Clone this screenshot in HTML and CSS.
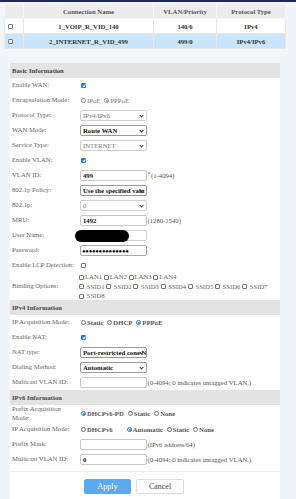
FILE: index.html
```html
<!DOCTYPE html>
<html>
<head>
<meta charset="utf-8">
<link rel="stylesheet" href="styles.css">
</head>
<body>
<div class="topbar"></div>
<table class="conn">
  <tr class="hd"><th class="ck"></th><th>Connection Name</th><th>VLAN/Priority</th><th>Protocol Type</th></tr>
  <tr><td class="ck"><span class="cb"></span></td><td>1_VOIP_R_VID_140</td><td>140/6</td><td>IPv4</td></tr>
  <tr class="sel"><td class="ck"><span class="cb"></span></td><td>2_INTERNET_R_VID_499</td><td>499/0</td><td>IPv4/IPv6</td></tr>
</table>

<div class="panel">
  <div class="sec">Basic Information</div>
  <div class="row"><div class="lbl">Enable WAN:</div><div class="ctl"><span class="cb on"></span></div></div>
  <div class="row"><div class="lbl">Encapsulation Mode:</div><div class="ctl"><span class="rd dis"></span><span class="opt dis">IPoE</span><span class="rd dis on"></span><span class="opt dis">PPPoE</span></div></div>
  <div class="row"><div class="lbl">Protocol Type:</div><div class="ctl"><span class="sel-box dis">IPv4/IPv6<i class="chev"></i></span></div></div>
  <div class="row"><div class="lbl">WAN Mode:</div><div class="ctl"><span class="sel-box act">Route WAN<i class="chev"></i></span></div></div>
  <div class="row"><div class="lbl">Service Type:</div><div class="ctl"><span class="sel-box dis">INTERNET<i class="chev"></i></span></div></div>
  <div class="row"><div class="lbl">Enable VLAN:</div><div class="ctl"><span class="cb on"></span></div></div>
  <div class="row"><div class="lbl">VLAN ID:</div><div class="ctl"><span class="inp val">499</span><span class="req">*</span><span class="note">(1-4094)</span></div></div>
  <div class="row"><div class="lbl">802.1p Policy:</div><div class="ctl"><span class="sel-box act">Use the specified valu<i class="chev"></i></span></div></div>
  <div class="row"><div class="lbl">802.1p:</div><div class="ctl"><span class="sel-box dis">0<i class="chev"></i></span></div></div>
  <div class="row"><div class="lbl">MRU:</div><div class="ctl"><span class="inp val">1492</span><span class="note">(1280-1540)</span></div></div>
  <div class="row"><div class="lbl">User Name:</div><div class="ctl"><span class="inp user"><span class="redact"></span></span></div></div>
  <div class="row"><div class="lbl">Password:</div><div class="ctl"><span class="inp pw">●●●●●●●●●●●●●●</span></div></div>
  <div class="row"><div class="lbl">Enable LCP Detection:</div><div class="ctl"><span class="cb"></span></div></div>
  <div class="row bind"><div class="lbl">Binding Options:</div>
    <div class="ctl flow">
      <div><span class="cb sq"></span>LAN1 <span class="cb sq"></span>LAN2 <span class="cb sq"></span>LAN3 <span class="cb sq"></span>LAN4</div>
      <div><span class="cb sq"></span> SSID1 <span class="cb sq"></span> SSID2 <span class="cb sq"></span> SSID3 <span class="cb sq"></span> SSID4 <span class="cb sq"></span> SSID5 <span class="cb sq"></span> SSID6 <span class="cb sq"></span> SSID7 <span class="cb sq"></span> SSID8</div>
    </div>
  </div>

  <div class="sec">IPv4 Information</div>
  <div class="row"><div class="lbl">IP Acquisition Mode:</div><div class="ctl"><span class="rd"></span><span class="opt">Static</span><span class="rd"></span><span class="opt">DHCP</span><span class="rd on"></span><span class="opt">PPPoE</span></div></div>
  <div class="row"><div class="lbl">Enable NAT:</div><div class="ctl"><span class="cb on"></span></div></div>
  <div class="row"><div class="lbl">NAT type:</div><div class="ctl"><span class="sel-box act">Port-restricted cone N<i class="chev"></i></span></div></div>
  <div class="row"><div class="lbl">Dialing Method:</div><div class="ctl"><span class="sel-box act">Automatic<i class="chev"></i></span></div></div>
  <div class="row"><div class="lbl">Multicast VLAN ID:</div><div class="ctl"><span class="inp val"></span><span class="note">(0-4094; 0 indicates untagged VLAN.)</span></div></div>

  <div class="sec">IPv6 Information</div>
  <div class="row tall"><div class="lbl">Prefix Acquisition Mode:</div><div class="ctl"><span class="rd on"></span><span class="opt">DHCPv6-PD</span><span class="rd"></span><span class="opt">Static</span><span class="rd"></span><span class="opt">None</span></div></div>
  <div class="row"><div class="lbl">IP Acquisition Mode:</div><div class="ctl"><span class="rd"></span><span class="opt wide">DHCPv6</span><span class="rd on"></span><span class="opt">Automatic</span><span class="rd"></span><span class="opt">Static</span><span class="rd"></span><span class="opt">None</span></div></div>
  <div class="row"><div class="lbl">Prefix Mask:</div><div class="ctl"><span class="inp val"></span><span class="note">(IPv6 address/64)</span></div></div>
  <div class="row"><div class="lbl">Multicast VLAN ID:</div><div class="ctl"><span class="inp val">0</span><span class="note">(0-4094; 0 indicates untagged VLAN.)</span></div></div>

  <div class="actions">
    <button class="btn apply">Apply</button>
    <button class="btn cancel">Cancel</button>
  </div>
</div>
</body>
</html>
```

FILE: styles.css
```css
html, body {
  margin: 0;
  padding: 0;
  background: #f1f5fa;
  font-family: "Liberation Serif", "Times New Roman", serif;
  font-size: 6.7px;
  color: #666;
}
.topbar {
  height: 2px;
  background: #1c2a5c;
}
.conn {
  margin: 1px 0 0 4px;
  width: 282px;
  border-collapse: collapse;
  background: #fff;
}
.conn th, .conn td {
  height: 14px;
  padding: 0;
  text-align: center;
  border: 1px solid #e8e8e8;
  font-weight: 700;
  color: #333;
}
.conn .hd th {
  background: #ececec;
  color: #555;
  border-color: #f6f6f6;
}
.conn th:nth-child(2) { width: 129px; }
.conn th:nth-child(3) { width: 62px; }
.conn .ck { width: 16px; text-align: left; padding-left: 2px; }
.conn .sel td { background: #c9e5fb; }

.panel {
  margin: 14px 16px 0 10px;
  background: #fff;
  padding-bottom: 10px;
}
.sec {
  height: 15px;
  line-height: 15px;
  background: #e3e3e3;
  padding-left: 2px;
  font-weight: 700;
  color: #444;
}
.row {
  display: flex;
  align-items: center;
  height: 15px;
  padding-left: 2px;
}
.row.tall { height: 17px; }
.row.bind { height: 27px; }
.lbl {
  width: 66px;
  flex: none;
  line-height: 8.5px;
  color: #666;
}
.ctl {
  display: flex;
  align-items: center;
  padding-left: 2px;
  white-space: nowrap;
}
.ctl.flow {
  display: block;
  white-space: normal;
  width: 190px;
  line-height: 9.5px;
  color: #666;
  padding-left: 1px;
}
.cb {
  display: inline-block;
  width: 5px;
  height: 5px;
  border: 0.6px solid #777;
  border-radius: 1px;
  background: #fff;
  box-sizing: border-box;
  margin-left: 1px;
  position: relative;
}
.cb.sq { vertical-align: -0.5px; margin-right: 1px; margin-left: 0; }
.cb.on {
  background: #1f74e0;
  border-color: #1f74e0;
}
.cb.on::after {
  content: "";
  position: absolute;
  left: 1.4px;
  top: 0.3px;
  width: 1.2px;
  height: 2.4px;
  border: solid #fff;
  border-width: 0 0.8px 0.8px 0;
  transform: rotate(40deg);
}
.conn .cb { margin-left: 1px; }
.rd {
  display: inline-block;
  width: 5px;
  height: 5px;
  border: 0.6px solid #777;
  border-radius: 50%;
  box-sizing: border-box;
  margin-left: 1px;
  margin-right: 1px;
  position: relative;
  flex: none;
}
.rd.on { border-color: #1f74e0; }
.rd.on::after {
  content: "";
  position: absolute;
  left: 0.9px;
  top: 0.9px;
  width: 2px;
  height: 2px;
  border-radius: 50%;
  background: #1f74e0;
}
.rd.dis { border-color: #999; }
.rd.dis.on { border-color: #999; }
.rd.dis.on::after { background: #999; }
.opt {
  margin-right: 3px;
  font-weight: 700;
  color: #555;
}
.opt.dis { color: #777; font-weight: 400; }
.opt.wide { margin-right: 13px; }
.sel-box, .inp {
  display: inline-flex;
  align-items: center;
  box-sizing: border-box;
  width: 67px;
  height: 11px;
  border: 0.6px solid #cfcfcf;
  border-radius: 2px;
  padding-left: 2px;
  background: #fff;
  color: #777;
  position: relative;
  overflow: hidden;
  flex: none;
}
.sel-box.act {
  border-color: #9a9a9a;
  color: #111;
  font-weight: 700;
}
.sel-box { padding-right: 8px; }
.chev {
  position: absolute;
  right: 3px;
  top: 3.3px;
  width: 2px;
  height: 2px;
  border: solid #333;
  border-width: 0 0.8px 0.8px 0;
  transform: rotate(45deg);
}
.sel-box.dis .chev { border-color: #555; }
.inp.val {
  color: #111;
  font-weight: 700;
  border-color: #c8c8c8;
}
.inp.pw {
  color: #111;
  font-size: 6px;
  letter-spacing: -0.3px;
  border-color: #aaa;
  padding-left: 1px;
}
.inp.user { overflow: visible; }
.redact {
  position: absolute;
  left: -6px;
  top: -1.5px;
  width: 54px;
  height: 12px;
  border-radius: 6px;
  background: #000;
}
.req {
  color: #e02020;
  font-size: 6px;
  margin-left: 0.5px;
  align-self: flex-start;
  margin-top: 1px;
}
.note {
  color: #555;
  margin-left: 0.5px;
}
.actions {
  margin-top: 4px;
  border-top: 1px solid #eee;
  padding-top: 7px;
  padding-left: 74px;
  display: flex;
  gap: 5px;
}
.btn {
  font-family: "Liberation Serif", "Times New Roman", serif;
  font-size: 8px;
  height: 15px;
  padding: 0;
  border-radius: 2px;
  cursor: pointer;
}
.apply {
  width: 47px;
  background: #5aaaf0;
  border: 1px solid #5aaaf0;
  color: #fff;
}
.cancel {
  width: 48px;
  background: #fff;
  border: 1px solid #ddd;
  color: #444;
}
```
